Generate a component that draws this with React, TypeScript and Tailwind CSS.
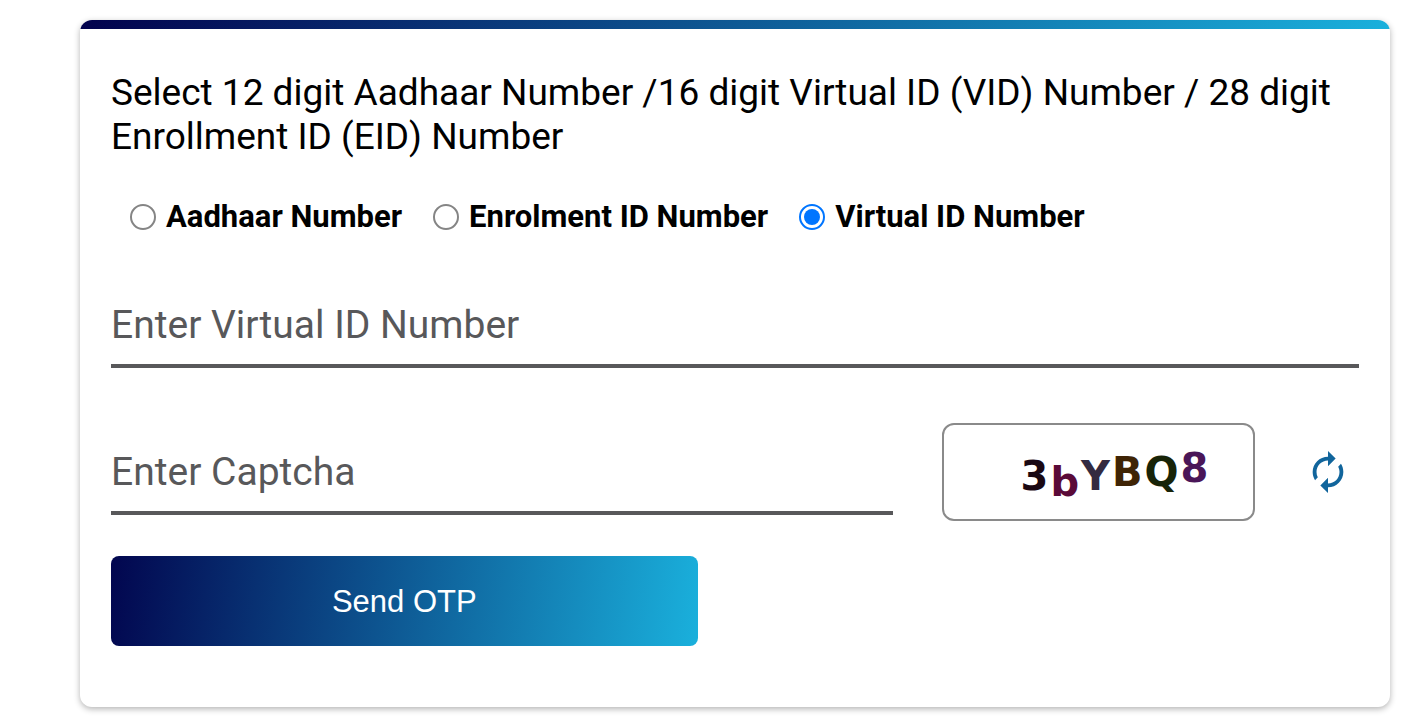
import React, { useState } from "react";

const idTypes = [
  { value: "aadhaar", label: "Aadhaar Number" },
  { value: "enrolment", label: "Enrolment ID Number" },
  { value: "virtual", label: "Virtual ID Number" },
];

const captcha = [
  { char: "3", style: "text-[#1a0812] pt-2" },
  { char: "b", style: "text-[#5a0a38] pt-5" },
  { char: "Y", style: "text-[#332a40] pt-2" },
  { char: "B", style: "text-[#3f2405]" },
  { char: "Q", style: "text-[#182408]" },
  { char: "8", style: "text-[#4a1658] pb-2" },
];

function RefreshIcon() {
  return (
    <svg viewBox="0 0 24 24" className="size-[46px]" fill="#11659c" aria-hidden="true">
      <path d="M12 6v3l4-4-4-4v3c-4.42 0-8 3.58-8 8 0 1.57.46 3.03 1.24 4.26L6.7 14.8A5.87 5.87 0 0 1 6 12c0-3.31 2.69-6 6-6zm6.76 1.74L17.3 9.2c.44.84.7 1.79.7 2.8 0 3.31-2.69 6-6 6v-3l-4 4 4 4v-3c4.42 0 8-3.58 8-8 0-1.57-.46-3.03-1.24-4.26z" />
    </svg>
  );
}

export default function App() {
  const [idType, setIdType] = useState("virtual");
  const idLabel = idTypes.find((t) => t.value === idType)!.label;

  return (
    <main className="bg-white pt-5 pr-[34px] pb-4 pl-20 font-['Roboto',sans-serif] text-black">
      <form
        onSubmit={(e) => e.preventDefault()}
        className="overflow-hidden rounded-xl bg-white shadow-[0_2px_6px_rgba(0,0,0,0.3)]"
      >
        <div className="h-[9px] bg-[linear-gradient(97deg,#02024d,#1ab0dc)]" />
        <div className="px-[31px] pt-[42px] pb-[61px]">
          <h1 className="text-[37px] leading-[44px]">
            Select 12 digit Aadhaar Number /16 digit Virtual ID (VID) Number / 28 digit Enrollment ID (EID) Number
          </h1>

          <div role="radiogroup" aria-label="ID type" className="mt-9 flex flex-wrap gap-x-[31px] px-[19px]">
            {idTypes.map((t) => (
              <label key={t.value} className="flex items-center gap-[10px] text-[31px] leading-[44px] font-bold">
                <input
                  type="radio"
                  name="idType"
                  checked={idType === t.value}
                  onChange={() => setIdType(t.value)}
                  className="size-[26px] appearance-none rounded-full border-2 border-[#858585] bg-white p-[3px] checked:border-[#0075ff] checked:bg-[#0075ff] checked:bg-clip-content"
                />
                {t.label}
              </label>
            ))}
          </div>

          <input
            type="text"
            aria-label={idLabel}
            placeholder={`Enter ${idLabel}`}
            className="mt-[46px] block h-[83px] w-full border-b-4 border-[#58585a] text-[39px] outline-none placeholder:text-[#58585a]"
          />

          <div className="mt-[55px] flex items-center">
            <input
              type="text"
              aria-label="Captcha"
              placeholder="Enter Captcha"
              className="mt-[3px] h-[83px] min-w-0 flex-1 border-b-4 border-[#58585a] text-[39px] outline-none placeholder:text-[#58585a]"
            />
            <div className="ml-[49px] flex h-[98px] w-[313px] items-center justify-center gap-0.5 rounded-xl border-2 border-[#8a8a8a] pl-8 font-['DejaVu_Sans',sans-serif] text-[40px] leading-none font-bold">
              {captcha.map((c) => (
                <span key={c.char} className={c.style}>{c.char}</span>
              ))}
            </div>
            <button type="button" aria-label="Refresh captcha" className="mr-2 ml-[50px]">
              <RefreshIcon />
            </button>
          </div>

          <button
            type="submit"
            className="mt-[35px] h-[90px] w-[47%] rounded-lg bg-[linear-gradient(97deg,#02064f,#1ab0dc)] pt-0.5 font-['Liberation_Sans',sans-serif] text-[31px] text-white"
          >
            Send OTP
          </button>
        </div>
      </form>
    </main>
  );
}
